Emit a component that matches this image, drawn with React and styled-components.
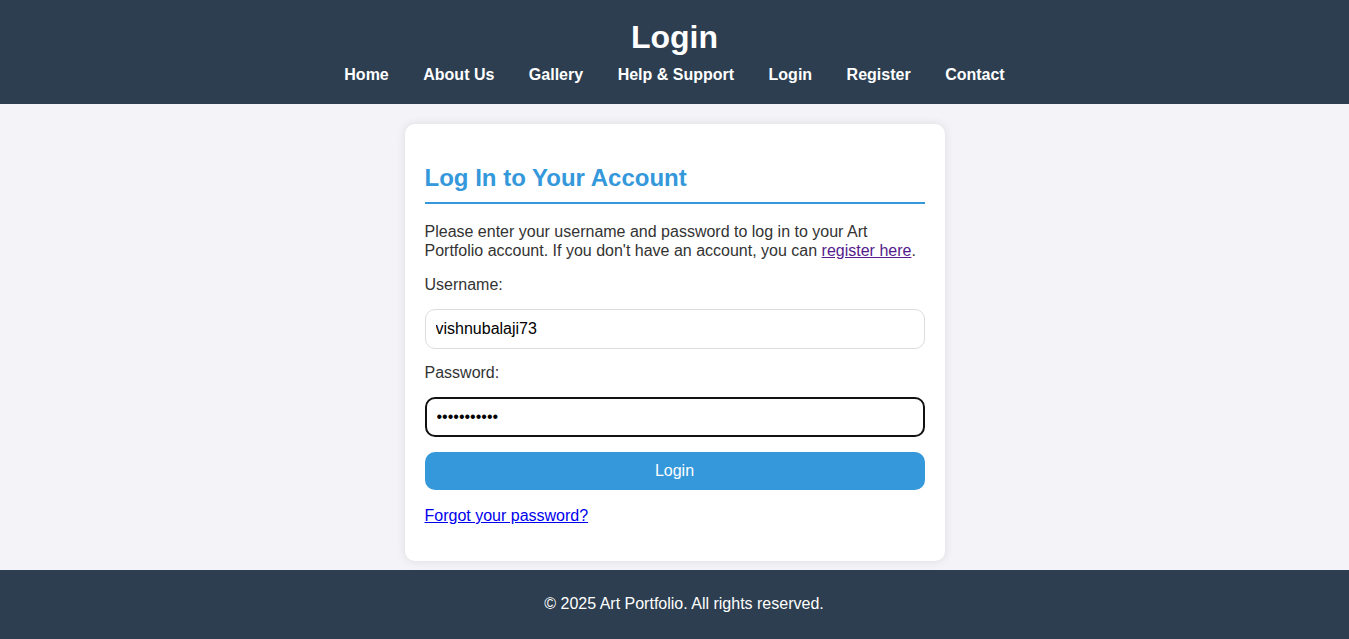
import React from "react";
import styled, { createGlobalStyle } from "styled-components";

const GlobalStyle = createGlobalStyle`
  body {
    margin: 0;
    font-family: "Liberation Sans", Arial, sans-serif;
    background-color: #f4f4f8;
    color: #333;
  }
`;

const Header = styled.header`
  background-color: #2c3e50;
  color: white;
  text-align: center;
  padding: 18px 0 20px;
`;

const Title = styled.h1`
  margin: 0 0 10px;
  font-size: 32px;
  line-height: 38px;
`;

const Nav = styled.nav`
  display: flex;
  justify-content: center;
  gap: 34.5px;

  a {
    color: white;
    text-decoration: none;
    font-weight: bold;
    font-size: 16px;
  }
`;

const Main = styled.main`
  padding: 20px 0 9px;
  display: flex;
  justify-content: center;
`;

const Card = styled.section`
  width: 540px;
  box-sizing: border-box;
  background: white;
  padding: 20px;
  border-radius: 10px;
  box-shadow: 0 0 10px rgba(0, 0, 0, 0.1);
`;

const Heading = styled.h2`
  color: #3498db;
  font-size: 24px;
  margin: 20px 0 18px;
  padding-bottom: 10px;
  border-bottom: 2px solid #3498db;
`;

const Text = styled.p`
  font-size: 16px;
  line-height: 19px;
  margin: 16px 0;

  a.visited {
    color: #551a8b;
  }

  a.plain {
    color: #0000ee;
  }
`;

const Label = styled.label`
  display: block;
  font-size: 16px;
`;

const Input = styled.input`
  display: block;
  width: 100%;
  box-sizing: border-box;
  margin: 15px 0;
  height: 40px;
  padding: 10px;
  font-family: inherit;
  font-size: 16px;
  color: #000;
  border: ${(p) => (p.$focused ? "2px solid #111" : "1px solid #ddd")};
  border-radius: 10px;
  outline: none;
`;

const Button = styled.button`
  display: block;
  width: 100%;
  height: 38px;
  background-color: #3498db;
  color: white;
  border: none;
  border-radius: 10px;
  font-family: inherit;
  font-size: 16px;
  cursor: pointer;
`;

const Footer = styled.footer`
  background-color: #2c3e50;
  color: white;
  text-align: center;
  padding: 25px 0 26px 19px;
  font-size: 16px;
`;

const App = () => {
  return (
    <>
      <GlobalStyle />
      <Header>
        <Title>Login</Title>
        <Nav>
          <a href="#">Home</a>
          <a href="#">About Us</a>
          <a href="#">Gallery</a>
          <a href="#">Help &amp; Support</a>
          <a href="#">Login</a>
          <a href="#">Register</a>
          <a href="#">Contact</a>
        </Nav>
      </Header>
      <Main>
        <Card>
          <Heading>Log In to Your Account</Heading>
          <Text>
            Please enter your username and password to log in to your Art Portfolio account. If you
            don't have an account, you can <a className="visited" href="#">register here</a>.
          </Text>
          <Label htmlFor="username">Username:</Label>
          <Input id="username" type="text" defaultValue="vishnubalaji73" />
          <Label htmlFor="password">Password:</Label>
          <Input id="password" type="password" defaultValue="vishnubal73" $focused />
          <Button>Login</Button>
          <Text>
            <a className="plain" href="#">Forgot your password?</a>
          </Text>
        </Card>
      </Main>
      <Footer>© 2025 Art Portfolio. All rights reserved.</Footer>
    </>
  );
};

export default App;
